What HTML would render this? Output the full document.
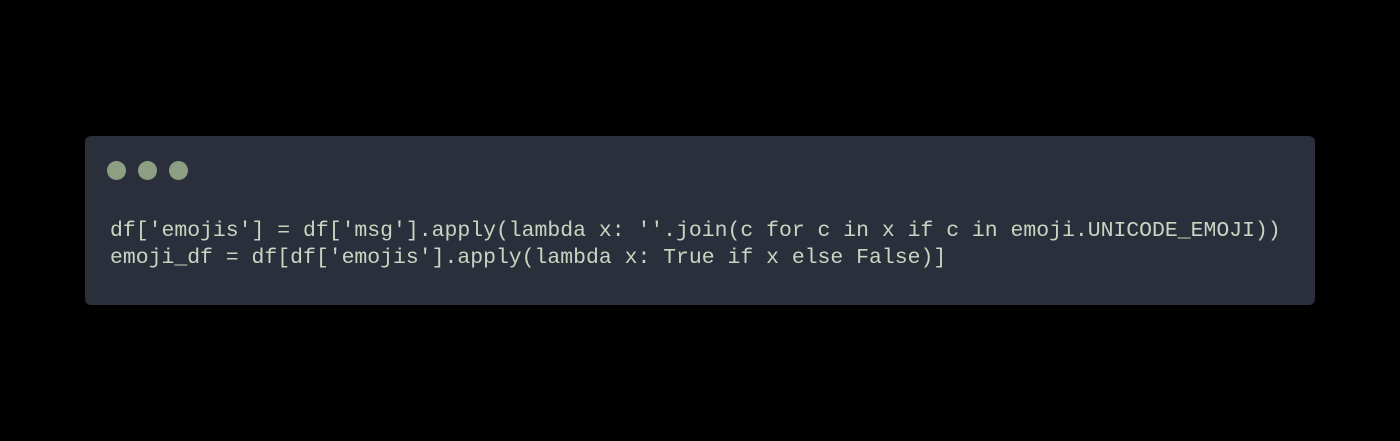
<html><head><style>
body{margin:0;width:1400px;height:441px;background:#000;position:relative;overflow:hidden}
.card{position:absolute;left:85px;top:136px;width:1230px;height:169px;background:#2b2f3c;border-radius:6px}
.d{position:absolute;top:25px;width:19px;height:19px;border-radius:50%;background:#8d9f82}
pre{position:absolute;left:25px;top:82px;margin:0;font-family:"Liberation Mono",monospace;font-size:21.45px;line-height:27px;color:#c9d5c1}
</style></head><body>
<div class="card">
<div class="d" style="left:22px"></div><div class="d" style="left:53px"></div><div class="d" style="left:84px"></div>
<pre>df['emojis'] = df['msg'].apply(lambda x: ''.join(c for c in x if c in emoji.UNICODE_EMOJI))
emoji_df = df[df['emojis'].apply(lambda x: True if x else False)]</pre>
</div>
</body></html>
